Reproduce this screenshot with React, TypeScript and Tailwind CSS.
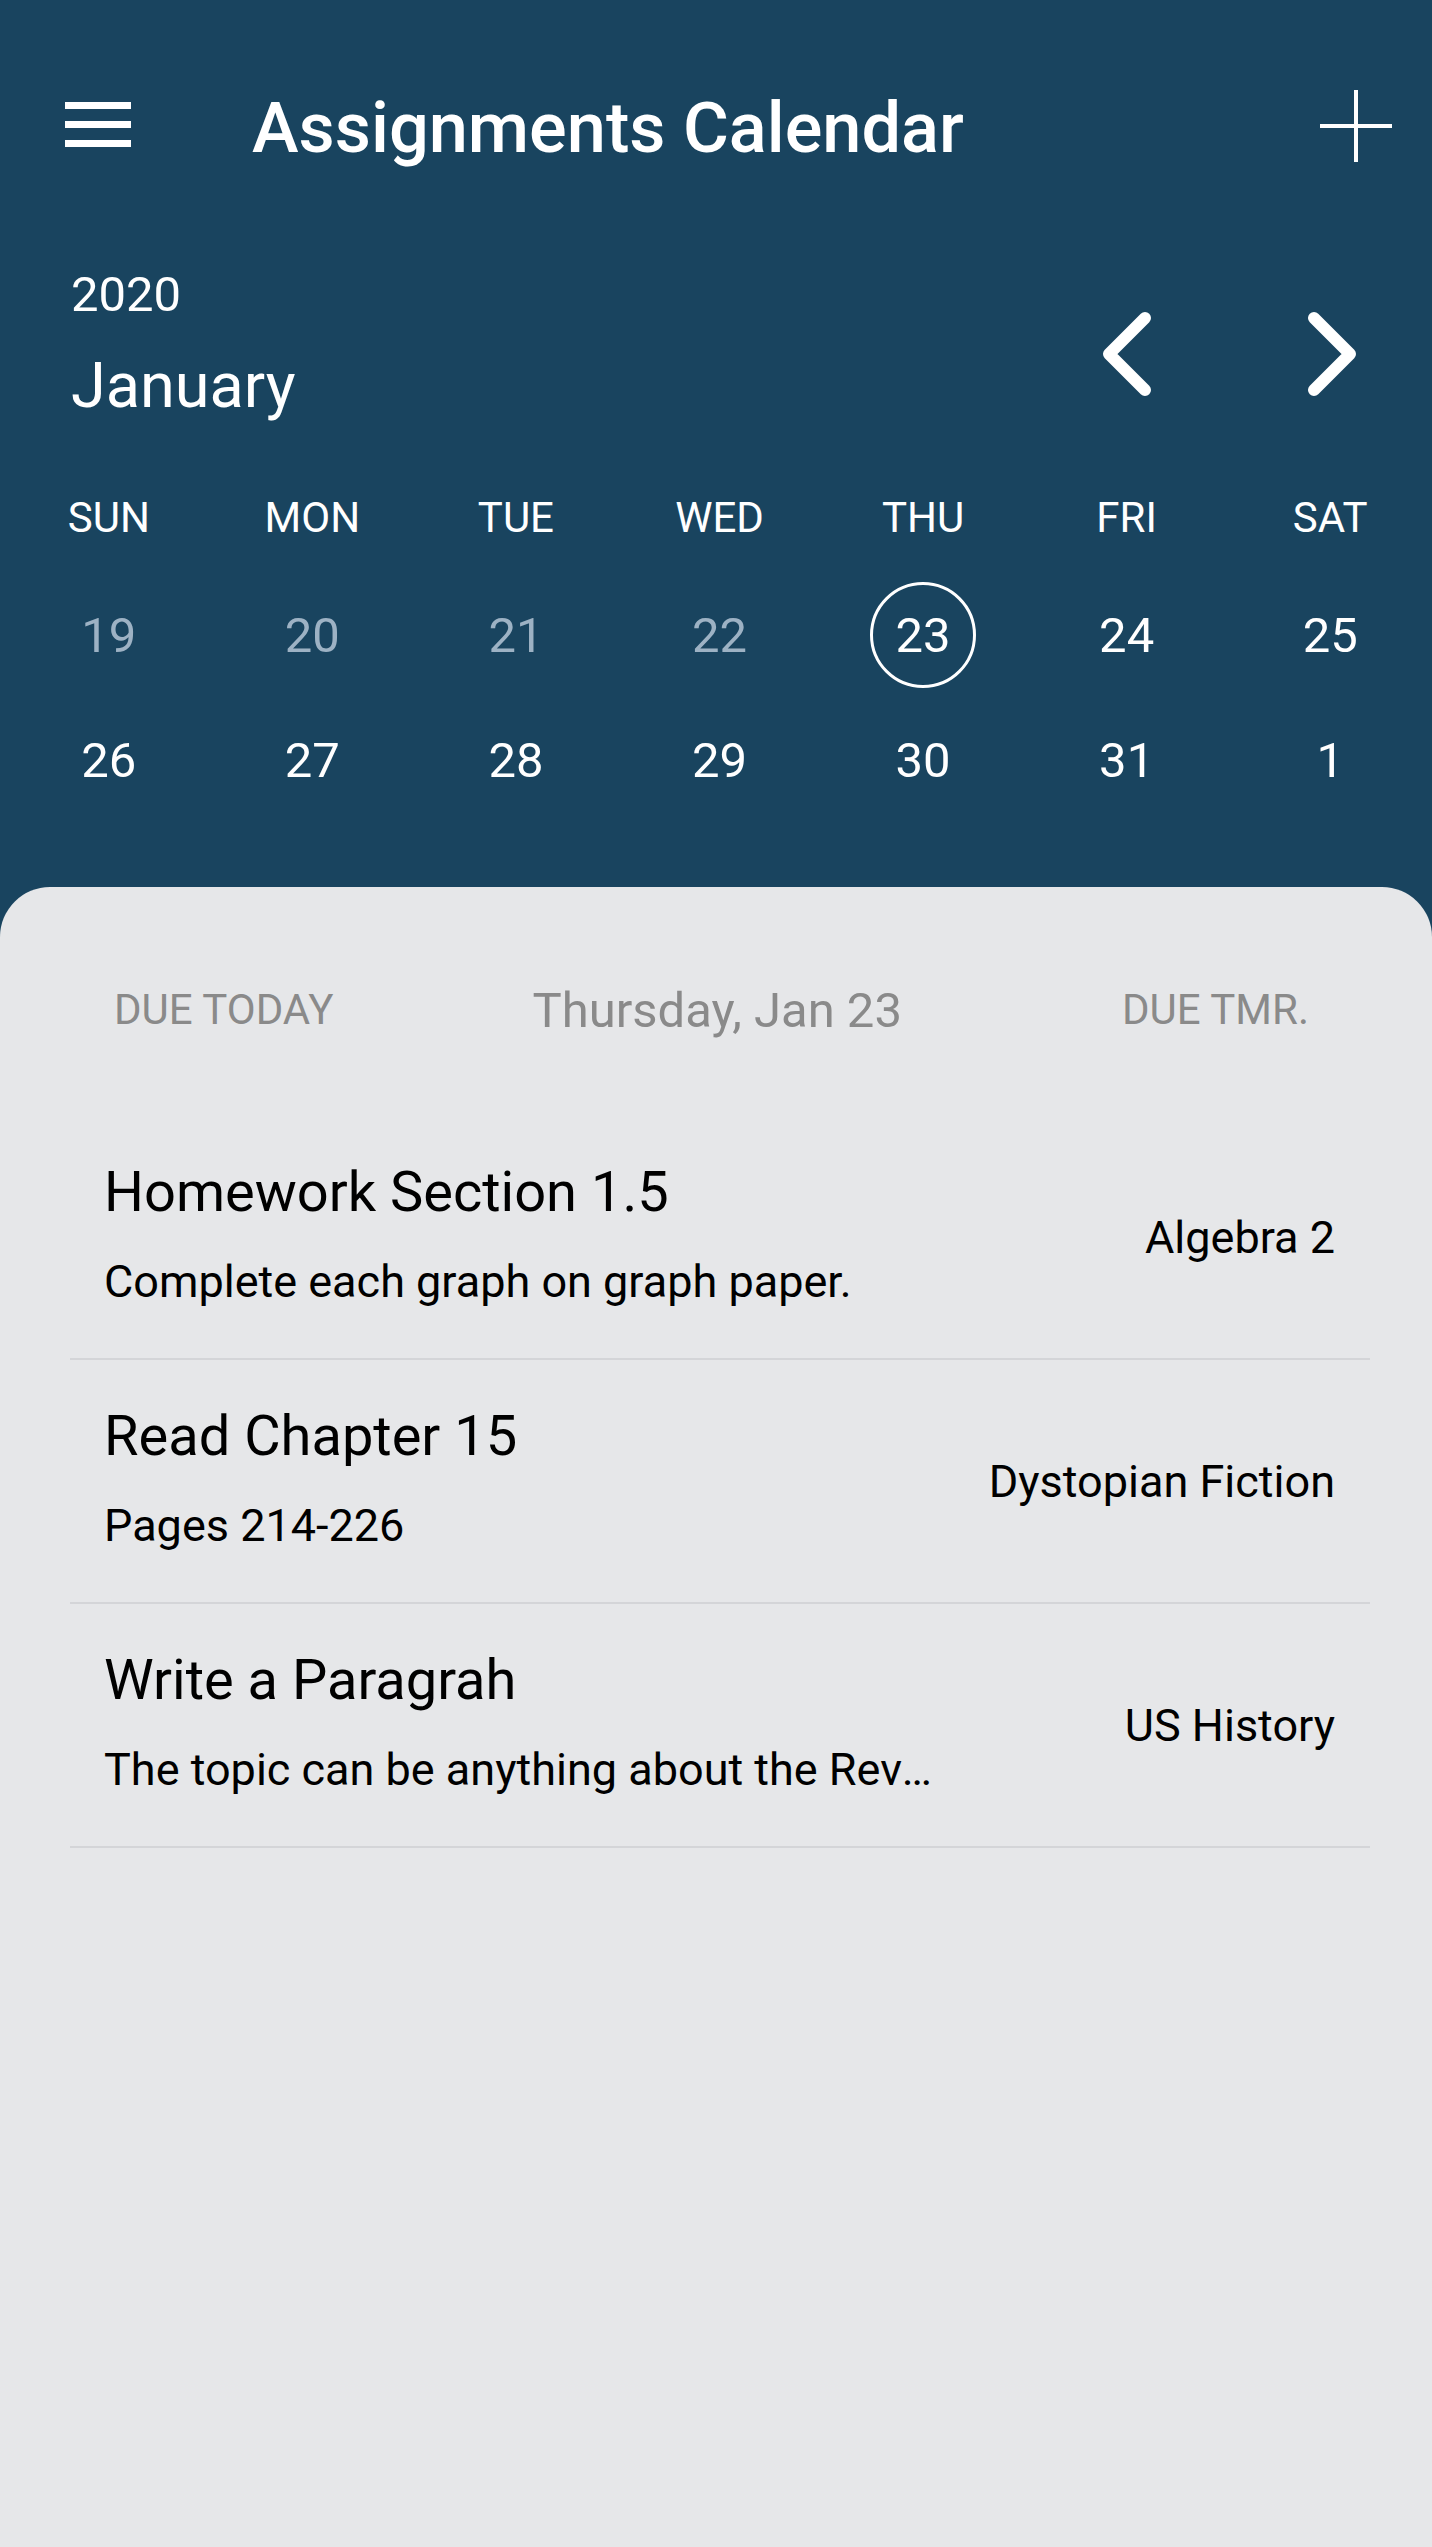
import React from 'react'

const weekdays = ['SUN', 'MON', 'TUE', 'WED', 'THU', 'FRI', 'SAT']

const weeks = [
  [
    { d: 19, past: true },
    { d: 20, past: true },
    { d: 21, past: true },
    { d: 22, past: true },
    { d: 23, today: true },
    { d: 24 },
    { d: 25 },
  ],
  [{ d: 26 }, { d: 27 }, { d: 28 }, { d: 29 }, { d: 30 }, { d: 31 }, { d: 1 }],
]

const assignments = [
  {
    title: 'Homework Section 1.5',
    note: 'Complete each graph on graph paper.',
    course: 'Algebra 2',
  },
  {
    title: 'Read Chapter 15',
    note: 'Pages 214-226',
    course: 'Dystopian Fiction',
  },
  {
    title: 'Write a Paragrah',
    note: 'The topic can be anything about the Revolutionary War.',
    course: 'US History',
  },
]

const Chevron = ({ dir }: { dir: 'left' | 'right' }) => (
  <svg width="50" height="86" viewBox="0 0 50 86" fill="none">
    <path
      d={dir === 'left' ? 'M43 7 L7 43 L43 79' : 'M7 7 L43 43 L7 79'}
      stroke="white"
      strokeWidth="12"
      strokeLinecap="round"
      strokeLinejoin="round"
    />
  </svg>
)

const App = () => {
  return (
    <div className="w-[1432px] min-h-[2547px] flex flex-col bg-[#19445f] font-['Roboto',sans-serif]">
      {/* top bar */}
      <div className="h-[256px] flex items-center">
        <div className="ml-[65px] mb-[7px] flex flex-col gap-[12px]">
          <span className="block h-[7px] w-[66px] bg-white" />
          <span className="block h-[7px] w-[66px] bg-white" />
          <span className="block h-[7px] w-[66px] bg-white" />
        </div>
        <h1 className="ml-[121px] text-[70.3px] leading-none font-medium text-white">
          Assignments Calendar
        </h1>
        <svg
          className="ml-auto mr-[40px] mb-[4px]"
          width="72"
          height="72"
          viewBox="0 0 72 72"
        >
          <path d="M0 36 H72 M36 0 V72" stroke="white" strokeWidth="4" />
        </svg>
      </div>

      {/* month + arrows */}
      <div className="pt-[14px] flex items-start">
        <div className="pl-[71px] flex flex-col text-white">
          <span className="text-[49px] leading-none">2020</span>
          <span className="mt-[35px] text-[63px] leading-none">January</span>
        </div>
        <div className="ml-auto mr-[75px] mt-[41px] flex gap-[155px]">
          <Chevron dir="left" />
          <Chevron dir="right" />
        </div>
      </div>

      {/* weekdays */}
      <div className="mt-[80px] pl-[7px] grid grid-cols-7 text-center text-[42px] leading-none text-white">
        {weekdays.map((w) => (
          <span key={w}>{w}</span>
        ))}
      </div>

      {/* dates */}
      <div className="mt-[43px] pl-[7px] flex flex-col gap-[19px]">
        {weeks.map((row, i) => (
          <div key={i} className="grid grid-cols-7">
            {row.map((c) => (
              <div key={c.d} className="h-[106px] flex items-center justify-center">
                <span
                  className={
                    c.today
                      ? 'w-[106px] h-[106px] rounded-full border-[3px] border-white flex items-center justify-center text-[49px] leading-none text-white'
                      : c.past
                        ? 'text-[49px] leading-none text-[#9db2c4]'
                        : 'text-[49px] leading-none text-white'
                  }
                >
                  {c.d}
                </span>
              </div>
            ))}
          </div>
        ))}
      </div>

      {/* sheet */}
      <div className="mt-[74px] flex-1 rounded-t-[50px] bg-[#e6e7e9] pt-[98px]">
        <div className="h-[50px] flex items-center">
          <span className="ml-[114px] text-[42px] leading-none text-[#8a8a8a]">DUE TODAY</span>
          <span className="ml-[199px] text-[49px] leading-none text-[#8a8a8a]">
            Thursday, Jan 23
          </span>
          <span className="ml-auto mr-[123px] text-[42px] leading-none text-[#8a8a8a]">
            DUE TMR.
          </span>
        </div>

        <ul className="mt-[81px] ml-[70px] mr-[62px]">
          {assignments.map((a) => (
            <li
              key={a.title}
              className="h-[244px] flex items-center justify-between border-b-2 border-[#d4d5d8] pl-[34px] pr-[35px]"
            >
              <div className="mb-[1px] flex flex-col gap-[34px] min-w-0 max-w-[838px]">
                <span className="text-[56px] leading-none text-black">{a.title}</span>
                <span className="text-[45px] leading-[56px] text-black truncate">{a.note}</span>
              </div>
              <span className="text-[45px] leading-none text-black whitespace-nowrap">
                {a.course}
              </span>
            </li>
          ))}
        </ul>
      </div>
    </div>
  )
}

export default App
